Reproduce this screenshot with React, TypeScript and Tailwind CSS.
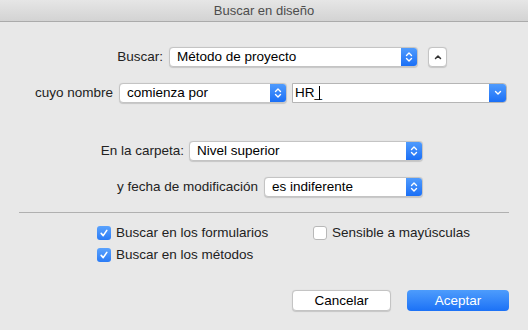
import React from 'react';

const font = { fontFamily: '"Liberation Sans", Arial, sans-serif' };

function UpDown() {
  return (
    <svg width="8" height="12" viewBox="0 0 8 12" fill="none" stroke="white" strokeWidth="1.4" strokeLinecap="round" strokeLinejoin="round">
      <path d="M1.5 4.5 L4 2 L6.5 4.5" />
      <path d="M1.5 7.5 L4 10 L6.5 7.5" />
    </svg>
  );
}

function Popup({ value, width }: { value: string; width: string }) {
  return (
    <div className={`${width} h-[20px] flex items-stretch bg-white border border-[#c4c4c4] rounded-[4px] shadow-[0_0.5px_1px_rgba(0,0,0,0.15)] overflow-hidden`}>
      <div className="flex-1 flex items-center pl-[7px] text-black">{value}</div>
      <div className="w-[16px] flex items-center justify-center bg-gradient-to-b from-[#4f9bfd] to-[#1a6ff6]">
        <UpDown />
      </div>
    </div>
  );
}

function Check({ checked }: { checked: boolean }) {
  return checked ? (
    <div className="w-[14px] h-[14px] rounded-[3px] bg-gradient-to-b from-[#5aa2fd] to-[#2a7bf6] flex items-center justify-center">
      <svg width="10" height="10" viewBox="0 0 10 10" fill="none" stroke="white" strokeWidth="1.6" strokeLinecap="round" strokeLinejoin="round">
        <path d="M2.2 5.4 L4.2 7.6 L7.8 2.4" />
      </svg>
    </div>
  ) : (
    <div className="w-[14px] h-[14px] rounded-[3px] bg-white border border-[#b8b8b8]" />
  );
}

export default function App() {
  return (
    <div className="w-[528px] h-[330px] bg-[#e8e8e8] flex flex-col overflow-hidden text-[13.5px] leading-[16px] text-[#222]" style={font}>
      {/* title bar */}
      <div className="h-[22px] flex items-center justify-center bg-gradient-to-b from-[#e6e6e6] to-[#d3d3d3] border-b border-[#ababab] text-[13px] text-[#4d4d4d]">
        Buscar en diseño
      </div>

      {/* Buscar */}
      <div className="flex items-center mt-[25px] h-[20px]">
        <div className="w-[163px] text-right">Buscar:</div>
        <div className="ml-[6px]">
          <Popup value="Método de proyecto" width="w-[249px]" />
        </div>
        <div className="ml-[10px] w-[19px] h-[20px] bg-white border border-[#c4c4c4] rounded-[4px] flex items-center justify-center shadow-[0_0.5px_1px_rgba(0,0,0,0.15)]">
          <svg width="8" height="6" viewBox="0 0 8 6" fill="none" stroke="#333" strokeWidth="1.5" strokeLinecap="round" strokeLinejoin="round">
            <path d="M1.5 4.5 L4 2 L6.5 4.5" />
          </svg>
        </div>
      </div>

      {/* cuyo nombre */}
      <div className="flex items-center mt-[16px] h-[19px]">
        <div className="w-[113px] text-right">cuyo nombre</div>
        <div className="ml-[6px]">
          <Popup value="comienza por" width="w-[168px]" />
        </div>
        <div className="ml-[5px] w-[215px] h-[20px] flex items-stretch bg-white border border-[#b5b5b5] rounded-r-[4px] overflow-hidden">
          <div className="flex-1 flex items-center pl-[2px] text-black">
            <span>HR_</span><span className="inline-block w-px h-[14px] bg-black -ml-[3px]" />
          </div>
          <div className="w-[17px] flex items-center justify-center bg-gradient-to-b from-[#4f9bfd] to-[#1a6ff6]">
            <svg width="8" height="6" viewBox="0 0 8 6" fill="none" stroke="white" strokeWidth="1.4" strokeLinecap="round" strokeLinejoin="round">
              <path d="M1.5 1.5 L4 4 L6.5 1.5" />
            </svg>
          </div>
        </div>
      </div>

      {/* En la carpeta */}
      <div className="flex items-center mt-[38px] h-[21px]">
        <div className="w-[184px] text-right">En la carpeta:</div>
        <div className="ml-[5px]">
          <Popup value="Nivel superior" width="w-[234px]" />
        </div>
      </div>

      {/* fecha */}
      <div className="flex items-center mt-[16px] h-[20px]">
        <div className="w-[258px] text-right">y fecha de modificación</div>
        <div className="ml-[6px]">
          <Popup value="es indiferente" width="w-[159px]" />
        </div>
      </div>

      <div className="mx-[19px] mt-[15px] h-px bg-[#b0b0b0]" />

      {/* options */}
      <div className="flex items-center mt-[13px] h-[14px] pl-[97px]">
        <div className="w-[216px] flex items-center gap-[5px]">
          <Check checked />
          <span>Buscar en los formularios</span>
        </div>
        <div className="flex items-center gap-[5px]">
          <Check checked={false} />
          <span>Sensible a mayúsculas</span>
        </div>
      </div>
      <div className="flex items-center mt-[8px] h-[14px] pl-[97px] gap-[5px]">
        <Check checked />
        <span>Buscar en los métodos</span>
      </div>

      {/* buttons */}
      <div className="flex justify-end mt-[28px] pr-[19px] gap-[16px]">
        <div className="w-[99px] h-[21px] bg-white border border-[#c4c4c4] rounded-[4px] flex items-center justify-center text-black shadow-[0_0.5px_1px_rgba(0,0,0,0.15)]">
          Cancelar
        </div>
        <div className="w-[102px] h-[21px] rounded-[4px] bg-gradient-to-b from-[#4d9cfc] to-[#1b71f6] flex items-center justify-center text-white">
          Aceptar
        </div>
      </div>
    </div>
  );
}
